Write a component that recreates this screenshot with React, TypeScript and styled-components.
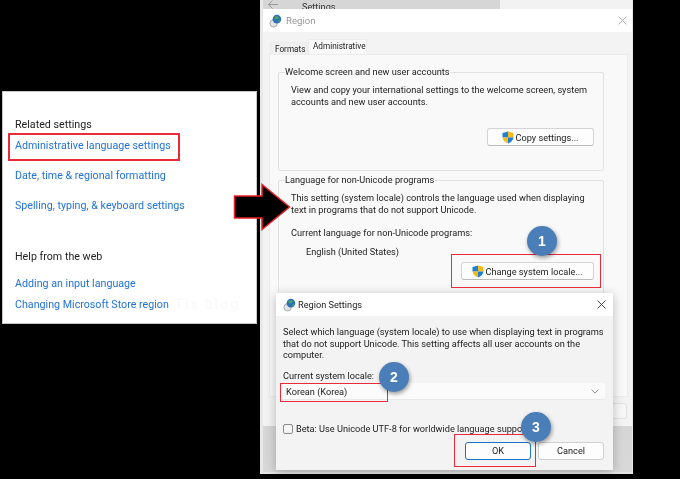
import React from 'react';
import styled, { createGlobalStyle } from 'styled-components';

const Global = createGlobalStyle`
  html, body { margin: 0; padding: 0; background: #000; }
  * { box-sizing: border-box; }
`;

const Page = styled.div`
  position: relative;
  width: 680px;
  height: 479px;
  background: #000;
  overflow: hidden;
  display: flex;
  align-items: flex-start;
  padding-left: 2px;
  font-family: Roboto, "Noto Sans", sans-serif;
  font-size: 9.2px;
  color: #1c1c1c;
  white-space: nowrap;
  filter: blur(0.3px);
`;

/* left panel */
const RelatedPanel = styled.div`
  position: relative;
  width: 255px;
  height: 233px;
  margin-top: 91px;
  background: #fff;
  box-shadow: inset 0 0 0 1px #c8c8c8;
  padding: 27px 0 0 13px;
  font-size: 10.7px;
`;
const PanelHeading = styled.div<{ $gap?: number }>`
  height: 14px;
  line-height: 14px;
  color: #222;
  margin-top: ${(p) => p.$gap || 0}px;
`;
const PanelLink = styled.a<{ $gap: number }>`
  display: block;
  height: 14px;
  line-height: 14px;
  color: #2273d6;
  margin-top: ${(p) => p.$gap}px;
`;
const Watermark = styled.span`
  position: absolute;
  left: 172px;
  top: 204px;
  font-size: 15px;
  font-weight: 700;
  letter-spacing: 1.5px;
  color: #fafafa;
`;

/* settings + region window */
const Desktop = styled.div`
  width: 373px;
  height: 474px;
  margin-left: 3px;
  border-left: 3px solid #e8e8e8;
  border-right: 1px solid #e8e8e8;
  border-bottom: 2px solid #e4e4e4;
  display: flex;
  flex-direction: column;
  background: linear-gradient(#c2c2c2, #d8d8d8);
`;
const SettingsStrip = styled.div`
  height: 9px;
  flex: none;
  overflow: hidden;
  display: flex;
  align-items: flex-start;
  background: linear-gradient(90deg, #d6d6d6 237px, #f2f2f2 237px);
  padding-left: 5px;
  line-height: 13px;
  font-size: 9.2px;
  color: #333;
`;
const BackArrow = styled.svg`
  width: 10px;
  height: 9px;
  margin-right: 24px;
`;
const RegionWindow = styled.div`
  height: 417px;
  flex: none;
  background: #f3f3f3;
  display: flex;
  flex-direction: column;
`;
const TitleBar = styled.div<{ $dark?: boolean }>`
  height: 23px;
  flex: none;
  background: #fff;
  display: flex;
  align-items: center;
  gap: ${(p) => (p.$dark ? 2 : 4)}px;
  padding: ${(p) => (p.$dark ? '0 7px' : '0 5px 0 6px')};
  color: ${(p) => (p.$dark ? '#222' : '#999')};
  font-size: ${(p) => (p.$dark ? 9.2 : 9.6)}px;
`;
const TitleText = styled.span`
  flex: 1;
`;
const TabRow = styled.div`
  height: 22px;
  flex: none;
  display: flex;
  align-items: flex-end;
  padding-left: 7px;
`;
const Tab = styled.div<{ $active?: boolean }>`
  width: ${(p) => (p.$active ? 59 : 38)}px;
  height: ${(p) => (p.$active ? 15 : 12)}px;
  line-height: ${(p) => (p.$active ? 12 : 12)}px;
  padding-left: 4px;
  background: ${(p) => (p.$active ? '#f9f9f9' : '#f0f0f0')};
  border: 1px solid #ececec;
  border-bottom: 0;
  font-size: 8.2px;
`;
const TabBody = styled.div`
  height: 343px;
  flex: none;
  margin: 0 4px 0 6px;
  background: #f9f9f9;
  border: 1px solid #ececec;
  padding: 11px 23px 0 8px;
`;
const Group = styled.fieldset<{ $height: number }>`
  height: ${(p) => p.$height}px;
  margin: 0 0 3px;
  padding: 0 9px 0 12px;
  border: 1px solid #e2e2e2;
  border-radius: 2px;
  display: flex;
  flex-direction: column;
  legend {
    padding: 0;
    margin-left: -6px;
    line-height: 12px;
  }
`;
const Para = styled.p`
  margin: 6px 0 0;
  line-height: 11.6px;
`;
const Line = styled.div<{ $indent?: number; $gap: number }>`
  line-height: 12px;
  margin-top: ${(p) => p.$gap}px;
  padding-left: ${(p) => p.$indent || 0}px;
`;
const ButtonRow = styled.div<{ $gap: number }>`
  display: flex;
  justify-content: flex-end;
  margin-top: ${(p) => p.$gap}px;
`;
const ShieldButton = styled.div<{ $width: number }>`
  width: ${(p) => p.$width}px;
  height: 18px;
  background: #fdfdfd;
  border: 1px solid #d4d4d4;
  border-bottom-color: #bbb;
  border-radius: 3px;
  display: flex;
  align-items: center;
  justify-content: center;
  gap: 1px;
`;
const WindowFooter = styled.div`
  flex: 1;
  display: flex;
  justify-content: flex-end;
  padding: 6px 5px 0 0;
`;
const FooterButton = styled.div`
  width: 66px;
  height: 16px;
  border: 1px solid #e2e2e2;
  border-radius: 3px;
  background: #f7f7f7;
`;

/* region settings dialog */
const Dialog = styled.div`
  position: absolute;
  left: 276px;
  top: 293px;
  width: 337px;
  height: 177px;
  background: #f3f3f3;
  box-shadow: 0 2px 10px rgba(0, 0, 0, 0.25);
  display: flex;
  flex-direction: column;
`;
const DialogBody = styled.div`
  padding: 10px 8px 0 7px;
  flex: 1;
  display: flex;
  flex-direction: column;
`;
const DialogText = styled.p`
  margin: 0;
  line-height: 11.7px;
`;
const Combo = styled.div`
  height: 17px;
  margin: 1px 0 0 -3px;
  background: #fbfbfb;
  border-bottom: 1px solid #e8e8e8;
  display: flex;
  align-items: center;
  justify-content: space-between;
  padding: 0 6px 0 6px;
`;
const BetaRow = styled.label`
  display: flex;
  align-items: center;
  gap: 3px;
  margin-top: 23px;
  white-space: nowrap;
`;
const Check = styled.span`
  width: 10px;
  height: 10px;
  background: #f6f6f6;
  border: 1px solid #8a8a8a;
  border-radius: 2px;
`;
const DialogActions = styled.div`
  display: flex;
  justify-content: flex-end;
  gap: 7px;
  margin-top: 8px;
  padding-right: 1px;
`;
const DialogButton = styled.div<{ $primary?: boolean }>`
  width: 66px;
  height: 18px;
  line-height: 16px;
  text-align: center;
  background: #fdfdfd;
  border: 1px solid ${(p) => (p.$primary ? '#1a73c4' : '#cfcfcf')};
  border-radius: 3px;
`;

/* annotations */
const Highlight = styled.div<{ $x: number; $y: number; $w: number; $h: number; $t?: number }>`
  position: absolute;
  left: ${(p) => p.$x}px;
  top: ${(p) => p.$y}px;
  width: ${(p) => p.$w}px;
  height: ${(p) => p.$h}px;
  border: ${(p) => p.$t || 1.5}px solid #ed2a38;
  pointer-events: none;
`;
const Badge = styled.div<{ $x: number; $y: number }>`
  position: absolute;
  left: ${(p) => p.$x - 15}px;
  top: ${(p) => p.$y - 15}px;
  width: 30px;
  height: 30px;
  border-radius: 50%;
  background: #4a7eb8;
  color: #fff;
  font-family: "Liberation Sans", sans-serif;
  font-weight: 700;
  font-size: 14px;
  line-height: 30px;
  text-align: center;
  box-shadow: 1px 2px 4px rgba(0, 0, 0, 0.4);
`;
const Arrow = styled.svg`
  position: absolute;
  left: 232px;
  top: 182px;
  width: 60px;
  height: 50px;
`;

const Shield = () => (
  <svg width="12" height="13" viewBox="0 0 12 13">
    <path d="M6 0.5 L11.5 2 V6.5 H6 Z" fill="#f6bb17" />
    <path d="M6 0.5 L0.5 2 V6.5 H6 Z" fill="#1f7fd8" />
    <path d="M0.5 6.5 H6 V12.5 C3 11.5 1 9.5 0.5 6.5 Z" fill="#f6bb17" />
    <path d="M11.5 6.5 H6 V12.5 C9 11.5 11 9.5 11.5 6.5 Z" fill="#1f7fd8" />
  </svg>
);

const Globe = () => (
  <svg width="13" height="14" viewBox="0 0 14 14">
    <circle cx="5" cy="9.5" r="4" fill="#e4e4e4" stroke="#8f9aa3" strokeWidth="0.8" />
    <circle cx="8.5" cy="5" r="4.6" fill="#2a6fc0" />
    <path d="M6 2.5 C8 1.5 10 2 10.5 3.5 C9.5 5.5 7 5.5 6 4.5 Z" fill="#4da64a" />
    <path d="M9.5 6.5 L12.5 6 L10.5 9 Z" fill="#4da64a" />
  </svg>
);

const CloseIcon = ({ color }: { color: string }) => (
  <svg width="9" height="9" viewBox="0 0 9 9">
    <path d="M0.5 0.5 L8.5 8.5 M8.5 0.5 L0.5 8.5" stroke={color} strokeWidth="0.9" />
  </svg>
);

export default function App() {
  return (
    <>
      <Global />
      <Page>
        <RelatedPanel>
          <PanelHeading>Related settings</PanelHeading>
          <PanelLink $gap={7}>Administrative language settings</PanelLink>
          <PanelLink $gap={16}>Date, time &amp; regional formatting</PanelLink>
          <PanelLink $gap={16}>Spelling, typing, &amp; keyboard settings</PanelLink>
          <PanelHeading $gap={37}>Help from the web</PanelHeading>
          <PanelLink $gap={13}>Adding an input language</PanelLink>
          <PanelLink $gap={7}>Changing Microsoft Store region</PanelLink>
          <Watermark>Tix blog</Watermark>
        </RelatedPanel>

        <Desktop>
          <SettingsStrip>
            <BackArrow viewBox="0 0 10 9">
              <path d="M4.5 0.5 L0.5 4.5 L4.5 8.5 M0.5 4.5 H10" fill="none" stroke="#8a8a8a" strokeWidth="0.8" />
            </BackArrow>
            Settings
          </SettingsStrip>
          <RegionWindow>
            <TitleBar>
              <Globe />
              <TitleText>Region</TitleText>
              <CloseIcon color="#aaa" />
            </TitleBar>
            <TabRow>
              <Tab>Formats</Tab>
              <Tab $active>Administrative</Tab>
            </TabRow>
            <TabBody>
              <Group $height={105}>
                <legend>Welcome screen and new user accounts</legend>
                <Para>
                  View and copy your international settings to the welcome screen, system
                  <br />
                  accounts and new user accounts.
                </Para>
                <ButtonRow $gap={21}>
                  <ShieldButton $width={107}>
                    <Shield />
                    Copy settings...
                  </ShieldButton>
                </ButtonRow>
              </Group>
              <Group $height={210}>
                <legend>Language for non-Unicode programs</legend>
                <Para>
                  This setting (system locale) controls the language used when displaying
                  <br />
                  text in programs that do not support Unicode.
                </Para>
                <Line $gap={12}>Current language for non-Unicode programs:</Line>
                <Line $gap={7} $indent={15}>English (United States)</Line>
                <ButtonRow $gap={4}>
                  <ShieldButton $width={133}>
                    <Shield />
                    Change system locale...
                  </ShieldButton>
                </ButtonRow>
              </Group>
            </TabBody>
            <WindowFooter>
              <FooterButton />
            </WindowFooter>
          </RegionWindow>
        </Desktop>

        <Dialog>
          <TitleBar $dark>
            <Globe />
            <TitleText>Region Settings</TitleText>
            <CloseIcon color="#333" />
          </TitleBar>
          <DialogBody>
            <DialogText>
              Select which language (system locale) to use when displaying text in programs
              <br />
              that do not support Unicode. This setting affects all user accounts on the
              <br />
              computer.
            </DialogText>
            <Line $gap={9}>Current system locale:</Line>
            <Combo>
              Korean (Korea)
              <svg width="8" height="5" viewBox="0 0 8 5">
                <path d="M0.5 0.5 L4 4 L7.5 0.5" fill="none" stroke="#777" strokeWidth="0.8" />
              </svg>
            </Combo>
            <BetaRow>
              <Check />
              Beta: Use Unicode UTF-8 for worldwide language support
            </BetaRow>
            <DialogActions>
              <DialogButton $primary>OK</DialogButton>
              <DialogButton>Cancel</DialogButton>
            </DialogActions>
          </DialogBody>
        </Dialog>

        <Highlight $x={8} $y={133} $w={172} $h={28} $t={2} />
        <Highlight $x={451} $y={254} $w={150} $h={34} />
        <Highlight $x={280} $y={383} $w={108} $h={19} />
        <Highlight $x={454} $y={434} $w={82} $h={33} />
        <Badge $x={542} $y={241}>1</Badge>
        <Badge $x={394} $y={377}>2</Badge>
        <Badge $x={536} $y={427}>3</Badge>
        <Arrow viewBox="0 0 60 50">
          <path d="M2.5 14 H30 V2.5 L57.5 25 L30 47.5 V36 H2.5 Z" fill="#000" stroke="#ed1c24" strokeWidth="1.5" />
        </Arrow>
      </Page>
    </>
  );
}
